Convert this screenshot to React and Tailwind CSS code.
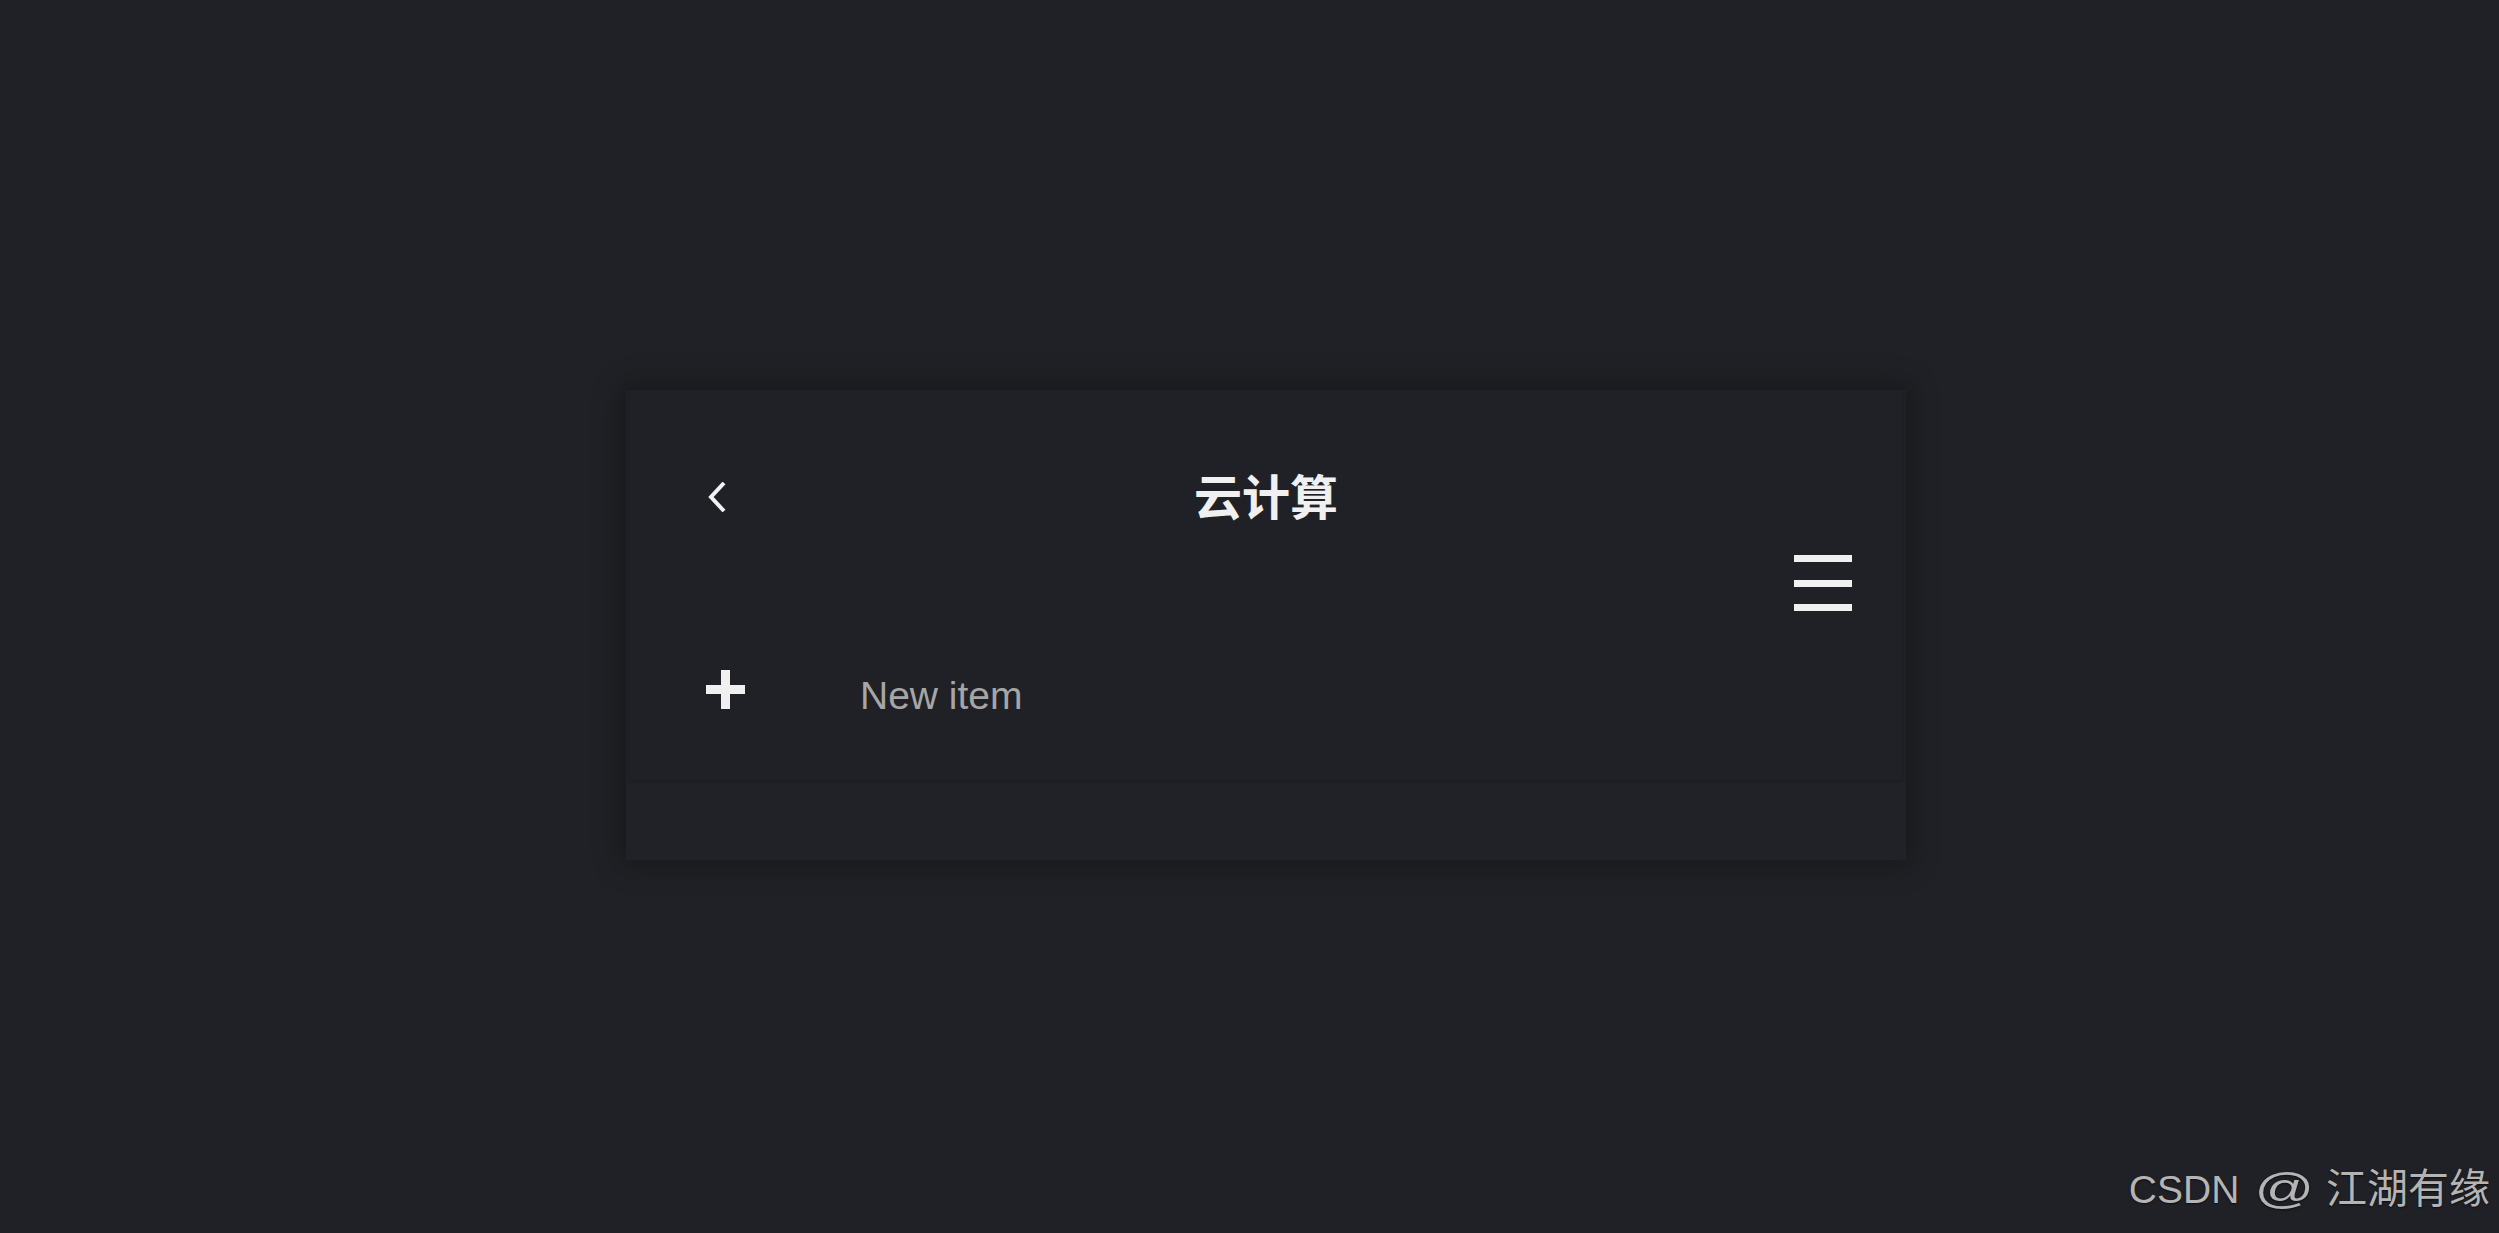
export default function App() {
  return (
    <div className="relative w-full h-[1233px] overflow-hidden bg-[#202126] pl-[626px] pt-[390px]" style={{ fontFamily: '"Liberation Sans", "Noto Sans CJK SC", sans-serif' }}>
      <div className="w-[1280px] h-[470px] bg-[#202126] flex flex-col shadow-[0_0_26px_6px_rgba(0,0,0,0.28)]">
        <div className="relative z-10 h-[390px] bg-[#202126] shadow-[0_2px_3px_rgba(0,0,0,0.18)] mx-[4px]">
          <div className="grid grid-cols-[1fr_auto_1fr] items-center h-[64px] mt-[75px] px-[78px]">
            <div className="flex items-center">
              <svg width="20" height="30" viewBox="0 0 20 30" className="block">
                <polyline points="16,1 3,15 16,29" fill="none" stroke="#f2f2f2" strokeWidth="4" />
              </svg>
            </div>
            <div className="text-[48px] leading-[64px] -translate-y-[3px] font-bold text-[#f0f0f0]" style={{ fontFamily: '"Noto Sans CJK SC", sans-serif' }}>云计算</div>
            <div />
          </div>
          <div className="flex justify-end pr-[50px] mt-[26px]">
            <div className="flex flex-col gap-[17.5px] w-[58px]">
              <div className="h-[7px] bg-[#f0f0f0]" />
              <div className="h-[7px] bg-[#f0f0f0]" />
              <div className="h-[7px] bg-[#f0f0f0]" />
            </div>
          </div>
          <div className="flex items-start pl-[76px] mt-[59px]">
            <svg width="39" height="39" viewBox="0 0 39 39" className="block shrink-0">
              <rect x="0" y="15" width="39" height="9" fill="#f0f0f0" />
              <rect x="15" y="0" width="9" height="39" fill="#f0f0f0" />
            </svg>
            <div className="ml-[115px] mt-[6px] text-[39px] leading-[39px] text-[#a6a6a6]">New item</div>
          </div>
        </div>
        <div className="h-[80px] bg-[#212227]" />
      </div>
      <div className="absolute right-[9px] bottom-[23px] flex items-baseline text-[39px] leading-[40px] text-[#b4b4b4] [text-shadow:0_1px_2px_rgba(0,0,0,0.6)]">
        <span>CSDN</span>
        <span className="inline-block ml-[24px] mr-[20px] text-[42px] scale-x-[1.4]">@</span>
        <span className="text-[41px]" style={{ fontFamily: '"Noto Sans CJK SC", sans-serif' }}>江湖有缘</span>
      </div>
    </div>
  );
}
